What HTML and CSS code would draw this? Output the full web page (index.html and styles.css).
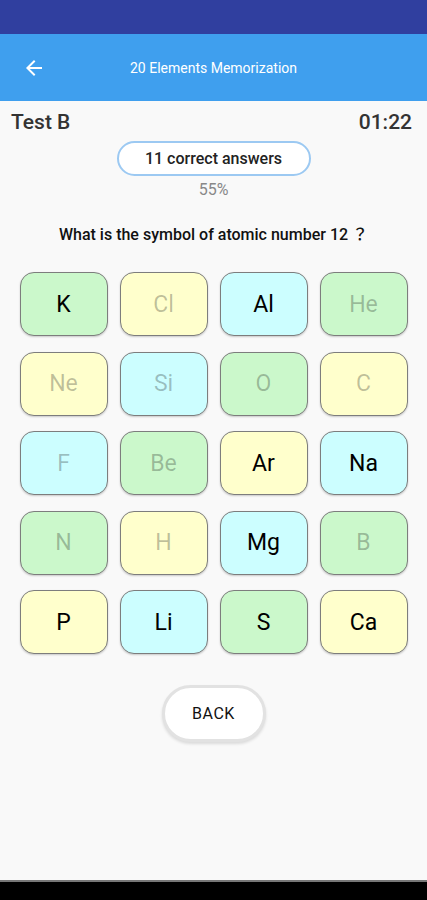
FILE: index.html
```html
<!DOCTYPE html>
<html lang="en">
<head>
  <meta charset="UTF-8" />
  <meta name="viewport" content="width=device-width, initial-scale=1.0"/>
  <title>20 Elements Memorization</title>
  <link rel="stylesheet" href="styles.css">
</head>
<body>
  <div class="status-bar"></div>
  <header class="app-bar">
    <svg class="back-icon" width="24" height="24" viewBox="0 0 24 24">
      <path d="M20 11H7.83l5.59-5.59L12 4l-8 8 8 8 1.41-1.41L7.83 13H20v-2z" fill="#fff"/>
    </svg>
    <div class="app-title">20 Elements Memorization</div>
  </header>

  <main class="content">
    <div class="test-head">
      <span>Test B</span>
      <span>01:22</span>
    </div>
    <div class="score-pill">11 correct answers</div>
    <div class="percent">55%</div>
    <div class="question">What is the symbol of atomic number 12 ？</div>

    <div class="grid">
      <div class="cell green">K</div>
      <div class="cell yellow done">Cl</div>
      <div class="cell cyan">Al</div>
      <div class="cell green done">He</div>

      <div class="cell yellow done">Ne</div>
      <div class="cell cyan done">Si</div>
      <div class="cell green done">O</div>
      <div class="cell yellow done">C</div>

      <div class="cell cyan done">F</div>
      <div class="cell green done">Be</div>
      <div class="cell yellow">Ar</div>
      <div class="cell cyan">Na</div>

      <div class="cell green done">N</div>
      <div class="cell yellow done">H</div>
      <div class="cell cyan">Mg</div>
      <div class="cell green done">B</div>

      <div class="cell yellow">P</div>
      <div class="cell cyan">Li</div>
      <div class="cell green">S</div>
      <div class="cell yellow">Ca</div>
    </div>

    <div class="back-wrap">
      <button class="back-btn">BACK</button>
    </div>
  </main>

  <div class="nav-bar"></div>
</body>
</html>
```

FILE: styles.css
```css
html, body {
  margin: 0;
  height: 100%;
}
body {
  background-color: #f9f9f9;
  font-family: Roboto, 'Noto Sans', 'Noto Sans CJK JP', sans-serif;
  color: #222;
  display: flex;
  flex-direction: column;
}
.status-bar {
  height: 34px;
  background-color: #303f9f;
}
.app-bar {
  height: 67px;
  background-color: #3f9fee;
  display: flex;
  align-items: center;
  position: relative;
}
.back-icon {
  margin-left: 22px;
}
.app-title {
  position: absolute;
  left: 0;
  right: 0;
  text-align: center;
  color: #fff;
  font-size: 14px;
  pointer-events: none;
}
.content {
  flex: 1;
  display: flex;
  flex-direction: column;
  align-items: center;
}
.test-head {
  align-self: stretch;
  display: flex;
  justify-content: space-between;
  padding: 9px 15px 0 11px;
  line-height: 24px;
  font-size: 21px;
  font-weight: 500;
  color: #333;
}
.score-pill {
  margin-top: 7px;
  width: 194px;
  height: 35px;
  box-sizing: border-box;
  border: 2px solid #9cc9f2;
  border-radius: 18px;
  background-color: #fff;
  display: flex;
  align-items: center;
  justify-content: center;
  font-size: 16px;
  font-weight: 500;
  color: #222;
}
.percent {
  margin-top: 4px;
  line-height: 20px;
  font-size: 16px;
  color: #888;
}
.question {
  margin-top: 25px;
  height: 20px;
  line-height: 20px;
  font-size: 16px;
  font-weight: 500;
  color: #111;
}
.grid {
  margin-top: 27px;
  display: grid;
  grid-template-columns: repeat(4, 88px);
  grid-auto-rows: 64px;
  column-gap: 12px;
  row-gap: 15.5px;
}
.cell {
  border: 1px solid #7d7d7d;
  border-radius: 14px;
  display: flex;
  align-items: center;
  justify-content: center;
  font-size: 23px;
  color: #000;
  box-shadow: 0 1px 2px rgba(0,0,0,0.2);
}
.cell.done {
  color: rgba(0,0,0,0.26);
}
.green { background-color: #cbf8cb; }
.yellow { background-color: #ffffcc; }
.cyan { background-color: #ccfeff; }
.back-wrap {
  margin-top: 31px;
}
.back-btn {
  width: 104px;
  height: 57px;
  border-radius: 29px;
  border: 3px solid #e2e2e2;
  background-color: #fff;
  box-shadow: 0 2px 3px rgba(0,0,0,0.12);
  font-family: Roboto, 'Noto Sans', sans-serif;
  font-size: 16px;
  color: #111;
  letter-spacing: 0.5px;
}
.nav-bar {
  height: 18px;
  background-color: #000;
  border-top: 2px solid #777;
  margin-top: auto;
}
```
